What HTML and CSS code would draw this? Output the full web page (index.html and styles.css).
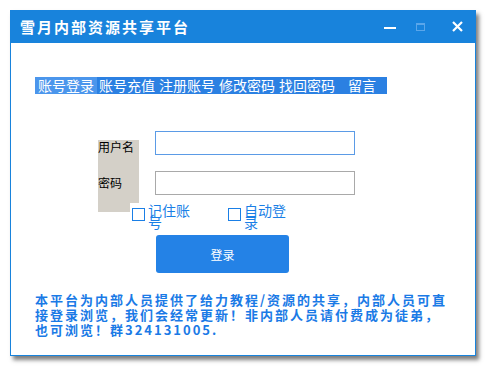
FILE: index.html
```html
<!DOCTYPE html>
<html lang="zh-CN">
<head>
  <meta charset="UTF-8">
  <title>雪月内部资源共享平台</title>
  <link rel="stylesheet" href="styles.css">
</head>
<body>
  <div class="window">
    <div class="titlebar">
      <span class="title">雪月内部资源共享平台</span>
      <div class="controls">
        <span class="btn btn-min"><i></i></span>
        <span class="btn btn-max">
          <svg width="9" height="8" viewBox="0 0 9 8"><rect x="0.5" y="0.5" width="8" height="7" fill="none" stroke="#5aa6ea"/><rect x="0" y="0" width="9" height="2" fill="#5aa6ea"/></svg>
        </span>
        <span class="btn btn-close">
          <svg width="11" height="11" viewBox="0 0 11 11"><path d="M1 1 L10 10 M10 1 L1 10" stroke="#fff" stroke-width="2.2"/></svg>
        </span>
      </div>
    </div>

    <div class="content">
      <ul class="menu">
        <li class="active">账号登录</li>
        <li>账号充值</li>
        <li>注册账号</li>
        <li>修改密码</li>
        <li>找回密码</li>
        <li class="last">留言</li>
      </ul>

      <div class="form">
        <div class="labels">
          <div class="label">用户名</div>
          <div class="label label-pwd">密码</div>
        </div>
        <div class="inputs">
          <input class="field focus" type="text">
          <input class="field" type="password">
        </div>
      </div>

      <div class="checks">
        <label class="check"><span class="box"></span><span class="check-text">记住账号</span></label>
        <label class="check check-auto"><span class="box"></span><span class="check-text">自动登录</span></label>
      </div>

      <button class="login">登录</button>

      <p class="notice">本平台为内部人员提供了给力教程/资源的共享，内部人员可直接登录浏览，我们会经常更新！非内部人员请付费成为徒弟，也可浏览！群324131005.</p>
    </div>
  </div>
</body>
</html>
```

FILE: styles.css
```css
* {
  box-sizing: border-box;
}

body {
  margin: 0;
  background: #fff;
  font-family: "Noto Sans CJK SC", "Liberation Sans", sans-serif;
}

.window {
  margin: 10px;
  width: 466px;
  height: 346px;
  border: 1px solid #1883dc;
  border-top: none;
  background: #fff;
  box-shadow: 3px 4px 4px rgba(0, 0, 0, 0.5);
}

.titlebar {
  height: 33px;
  margin: 0 -1px;
  background: #1883dc;
  display: flex;
  align-items: center;
  padding-left: 10px;
}

.title {
  color: #fff;
  font-size: 15px;
  font-weight: bold;
  letter-spacing: 2px;
}

.controls {
  margin-left: auto;
  display: flex;
  align-items: center;
  padding-right: 4px;
}

.btn {
  width: 30px;
  height: 20px;
  display: flex;
  align-items: center;
  justify-content: center;
}

.btn-min i {
  display: block;
  width: 12px;
  height: 2px;
  background: #fff;
  margin-top: 2px;
}

.btn-close {
  margin-left: 7px;
}

.content {
  padding: 34px 0 0 24px;
}

.menu {
  margin: 0;
  padding: 0 9px 0 0;
  list-style: none;
  display: flex;
  width: fit-content;
  background: #2b80e2;
  color: #fff;
  font-size: 14px;
  line-height: 17px;
  height: 17px;
}

.menu li {
  padding: 0 2px;
}

.menu li.active {
  background: #4b96ec;
  padding: 0 3px 0 3px;
}

.menu li.last {
  margin-left: 9px;
}

.form {
  display: flex;
  align-items: flex-start;
  margin-top: 37px;
}

.labels {
  width: 41px;
  height: 72px;
  margin: 9px 0 0 63px;
  background: #d4d0c8;
  font-size: 12px;
  line-height: 14px;
  color: #000;
}

.label-pwd {
  margin-top: 22px;
}

.inputs {
  display: flex;
  flex-direction: column;
  gap: 16px;
  margin-left: 16px;
}

.field {
  width: 200px;
  height: 24px;
  margin: 0;
  border: 1px solid #a9a9a9;
  background: #fff;
  outline: none;
}

.field.focus {
  border-color: #5b9be6;
}

.checks {
  display: flex;
  margin: -9px 0 0 95px;
  height: 28px;
}

.check {
  display: inline-flex;
  align-items: flex-start;
  background: #fff;
  padding: 5px 0 0 2px;
  width: 96px;
  color: #1a7fe6;
  font-size: 14px;
  line-height: 12px;
}

.box {
  width: 13px;
  height: 13px;
  border: 1px solid #1a7fe6;
  flex-shrink: 0;
}

.check-text {
  width: 46px;
  margin: -4px 0 0 3px;
}

.login {
  display: block;
  margin: 4px 0 0 121px;
  width: 133px;
  height: 38px;
  border: none;
  border-radius: 3px;
  background: #2482e6;
  color: #fff;
  font-family: "Noto Sans CJK SC", sans-serif;
  font-size: 12px;
}

.notice {
  margin: 19px 0 0 0;
  width: 418px;
  color: #1a7ae6;
  font-size: 13px;
  font-weight: bold;
  line-height: 15px;
  letter-spacing: 2px;
}
```
